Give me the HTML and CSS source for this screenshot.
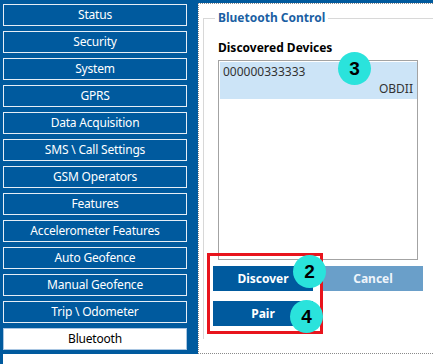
FILE: index.html
```html
<!DOCTYPE html>
<html>
<head>
<meta charset="utf-8">
<link rel="stylesheet" href="styles.css">
</head>
<body>
<div class="app">
  <nav class="sidebar">
    <div class="nav-btn">Status</div>
    <div class="nav-btn">Security</div>
    <div class="nav-btn">System</div>
    <div class="nav-btn">GPRS</div>
    <div class="nav-btn">Data Acquisition</div>
    <div class="nav-btn">SMS \ Call Settings</div>
    <div class="nav-btn">GSM Operators</div>
    <div class="nav-btn">Features</div>
    <div class="nav-btn">Accelerometer Features</div>
    <div class="nav-btn">Auto Geofence</div>
    <div class="nav-btn">Manual Geofence</div>
    <div class="nav-btn">Trip \ Odometer</div>
    <div class="nav-btn active">Bluetooth</div>
  </nav>
  <main class="panel">
    <fieldset class="group">
      <legend class="group-title">Bluetooth Control</legend>
      <div class="group-body">
        <div class="label">Discovered Devices</div>
        <div class="listbox">
          <div class="item selected">
            <div class="item-id">000000333333</div>
            <div class="item-name">OBDII</div>
          </div>
        </div>
      </div>
      <div class="actions">
        <div class="btn-row">
          <div class="btn primary">Discover</div>
          <div class="btn disabled">Cancel</div>
        </div>
        <div class="btn-row">
          <div class="btn primary">Pair</div>
        </div>
      </div>
    </fieldset>
    <div class="highlight"></div>
    <div class="badge b3">3</div>
    <div class="badge b2">2</div>
    <div class="badge b4">4</div>
  </main>
</div>
<div class="footer"></div>
</body>
</html>
```
FILE: styles.css
```css
* { box-sizing: border-box; }
html, body { margin: 0; padding: 0; background: #fff; }
body {
  width: 433px;
  height: 364px;
  overflow: hidden;
  font-family: "Noto Sans", "Open Sans", sans-serif;
  font-size: 12px;
}
.app {
  display: flex;
  height: 354px;
  background: #005a9e;
  padding-top: 3px;
}
.sidebar {
  width: 198px;
  flex: none;
  padding: 1px 11px 0 3px;
  display: flex;
  flex-direction: column;
  gap: 5px;
}
.nav-btn {
  height: 22px;
  border: 1px solid #e6eef6;
  color: #fff;
  text-align: center;
  line-height: 20px;
  font-size: 12px;
  letter-spacing: -0.2px;
}
.nav-btn.active {
  background: #fff;
  color: #000;
  border-color: #a9c6e2;
}
.panel {
  position: relative;
  flex: 1;
  background: #fff;
  border: 1px dotted #8a8a8a;
  border-right: none;
  overflow: hidden;
  padding: 6px 0 0 4px;
}
.group {
  margin: 0 -40px 0 0;
  padding: 0 0 0 11px;
  height: 329px;
  border: 1px solid #d8d8d8;
  border-bottom: none;
}
.group-title {
  padding: 0 3px;
  color: #1b5fa3;
  font-weight: bold;
  font-size: 12px;
  line-height: 16px;
}
.group-body {
  padding: 14px 0 0 3px;
}
.label {
  font-weight: bold;
  font-size: 12px;
  line-height: 16px;
  color: #000;
}
.listbox {
  margin-top: 4px;
  width: 200px;
  height: 200px;
  border: 1px solid #a3a3a3;
  padding: 1px 0 0 1px;
}
.item {
  padding: 1px 4px 2px 3px;
  color: #333;
  font-size: 12px;
  line-height: 17px;
}
.item.selected { background: #cce4f7; }
.item-name { text-align: right; }
.actions {
  margin: 6px 0 0 -2px;
  display: flex;
  flex-direction: column;
  gap: 10px;
}
.btn-row { display: flex; gap: 10px; }
.btn {
  width: 100px;
  height: 25px;
  line-height: 25px;
  text-align: center;
  color: #fff;
  font-weight: bold;
  font-size: 12px;
}
.btn.primary { background: #005a9e; }
.btn.disabled { background: #6a9fc9; color: #eef4fa; }
.highlight {
  position: absolute;
  left: 8px;
  top: 249px;
  width: 116px;
  height: 81px;
  border: 3px solid #e8141d;
}
.badge {
  position: absolute;
  width: 33px;
  height: 33px;
  border-radius: 50%;
  background: #2ae3dc;
  color: #000;
  font-family: "Liberation Sans", Arial, sans-serif;
  font-weight: bold;
  font-size: 19px;
  line-height: 33px;
  text-align: center;
}
.b3 { left: 139px; top: 48px; }
.b2 { left: 94px; top: 251px; }
.b4 { left: 91px; top: 296px; }
.footer {
  height: 10px;
  border-left: 3px solid #005a9e;
}
```
